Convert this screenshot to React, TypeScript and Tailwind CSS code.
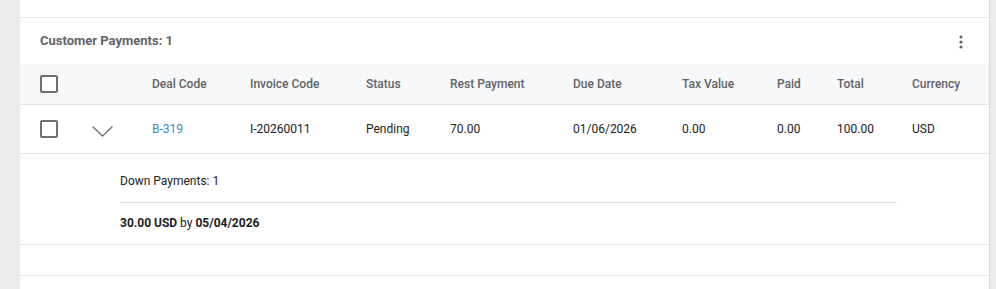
import React from "react";

const cols = [
  { key: "deal", label: "Deal Code", w: "w-[98px]" },
  { key: "inv", label: "Invoice Code", w: "w-[116px]" },
  { key: "status", label: "Status", w: "w-[84px]" },
  { key: "rest", label: "Rest Payment", w: "w-[123px]" },
  { key: "due", label: "Due Date", w: "w-[109px]" },
  { key: "tax", label: "Tax Value", w: "w-[95px]" },
  { key: "paid", label: "Paid", w: "w-[60px]" },
  { key: "total", label: "Total", w: "w-[75px]" },
  { key: "cur", label: "Currency", w: "flex-1" },
];

const row: Record<string, string> = {
  deal: "B-319",
  inv: "I-20260011",
  status: "Pending",
  rest: "70.00",
  due: "01/06/2026",
  tax: "0.00",
  paid: "0.00",
  total: "100.00",
  cur: "USD",
};

function Checkbox() {
  return <div className="w-[18px] h-[18px] border-2 border-[#6f6f6f] rounded-[2px] bg-white" />;
}

export default function App() {
  return (
    <div
      className="w-[996px] h-[289px] bg-[#ebebeb] flex overflow-hidden"
      style={{ fontFamily: "Roboto, 'Liberation Sans', sans-serif" }}
    >
      <div className="ml-[20px] w-[970px] bg-white border-r border-[#dcdcdc] flex flex-col">
        <div className="h-[18px] shrink-0 border-b border-[#e6e6e6]" />
        <div className="h-[46px] shrink-0 flex items-center justify-between pl-[20px] pr-[26px]">
          <span className="text-[13px] font-bold text-[#5f6368]">Customer Payments: 1</span>
          <svg width="4" height="14" viewBox="0 0 4 14" className="mt-[2px]">
            <circle cx="2" cy="2" r="1.6" fill="#5f6368" />
            <circle cx="2" cy="7" r="1.6" fill="#5f6368" />
            <circle cx="2" cy="12" r="1.6" fill="#5f6368" />
          </svg>
        </div>
        <div className="h-[41px] shrink-0 bg-[#f7f8fa] border-b border-[#e3e3e3] flex items-center text-[12px] font-medium text-[#5f6368]">
          <div className="w-[52px] pl-[20px] flex items-center">
            <Checkbox />
          </div>
          <div className="w-[80px]" />
          {cols.map((c) => (
            <div key={c.key} className={c.w}>
              {c.label}
            </div>
          ))}
        </div>
        <div className="h-[49px] shrink-0 border-b border-[#e3e3e3] flex items-center text-[12px] text-[#202124]">
          <div className="w-[52px] pl-[20px] flex items-center">
            <Checkbox />
          </div>
          <div className="w-[80px] pl-[20px] flex items-center">
            <svg width="21" height="11" viewBox="0 0 21 11" className="mt-[4px]">
              <path d="M0.5 0.5 L10.5 10 L20.5 0.5" fill="none" stroke="#6f6f6f" strokeWidth="1.3" />
            </svg>
          </div>
          {cols.map((c) => (
            <div key={c.key} className={`${c.w} ${c.key === "deal" ? "text-[#3a87c4]" : ""}`}>
              {row[c.key]}
            </div>
          ))}
        </div>
        <div className="h-[91px] shrink-0 border-b border-[#e3e3e3] pl-[100px] pr-[92px] flex flex-col text-[12px] text-[#202124]">
          <div className="h-[48px] flex items-end pb-[12px]">Down Payments: 1</div>
          <div className="border-t border-[#dedede]" />
          <div className="pt-[11px]">
            <span className="font-bold">30.00 USD</span> by <span className="font-bold">05/04/2026</span>
          </div>
        </div>
        <div className="h-[31px] shrink-0 border-b border-[#e8e8e8]" />
        <div className="flex-1" />
      </div>
    </div>
  );
}
